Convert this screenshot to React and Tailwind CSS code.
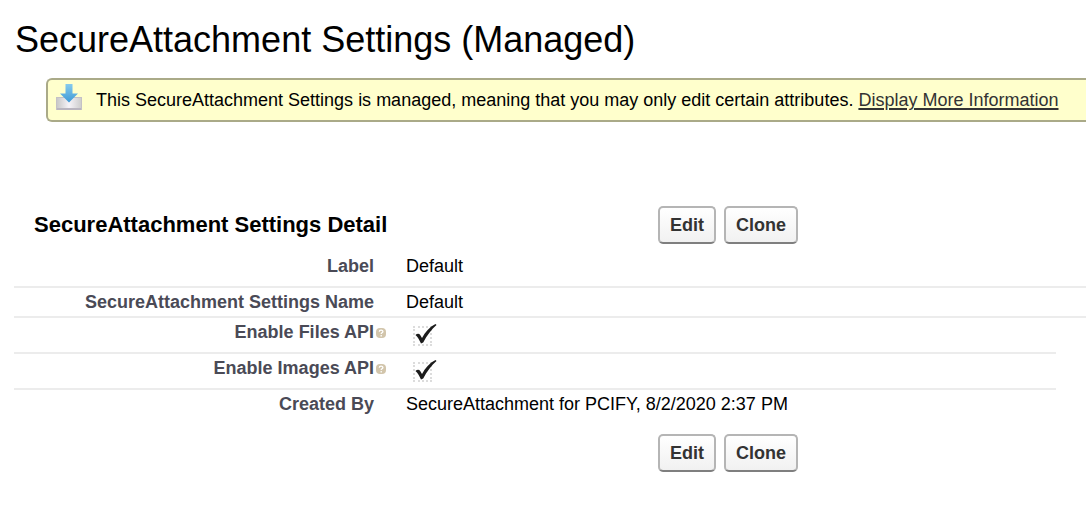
const InstalledIcon = () => (
    <svg className="h-7 w-7 shrink-0" viewBox="0 0 28 28" aria-hidden="true">
        <defs>
            <linearGradient id="tray" x1="0" y1="0" x2="1" y2="0">
                <stop offset="0" stopColor="#c6c6c6" />
                <stop offset="0.5" stopColor="#f6f3f8" />
                <stop offset="1" stopColor="#cccccc" />
            </linearGradient>
            <linearGradient id="arrow" x1="0" y1="0" x2="0" y2="1">
                <stop offset="0" stopColor="#86cbee" />
                <stop offset="1" stopColor="#3f9ad6" />
            </linearGradient>
        </defs>
        <rect x="0.500" y="13.500" width="25" height="12" fill="url(#tray)" stroke="#c4c1c6" />
        <path d="M1 25h24" stroke="#b9b5bf" strokeWidth="2" />
        <path d="M9.500 0h7v9.500h5.500L13 18.500 4 9.500h5.500z" fill="url(#arrow)" />
    </svg>
);

const HelpIcon = () => (
    <svg className="h-[10px] w-[10px]" viewBox="0 0 10 10" aria-hidden="true">
        <rect width="10" height="10" rx="4" fill="#d2c5ab" />
        <path
            d="M3.300 3.700C3.300 1.600 6.900 1.600 6.900 3.600 6.900 4.800 5.200 4.800 5.200 6M5.200 7.100v1.300"
            fill="none"
            stroke="#fff"
            strokeWidth="1.300"
        />
    </svg>
);

const CheckMark = () => (
    <svg
        className="pointer-events-none col-start-1 row-start-1 h-6 w-6"
        viewBox="0 0 24 24"
        aria-hidden="true"
    >
        <path
            d="M2.500 12C4 10.600 6 10.300 7.200 12L9 15C12 9 16.500 4 22.500 1L23.500 2C18.500 6.500 14 12 10.200 19.500L8 20.500C6.300 17 5 14 2.500 12z"
            fill="#1c1c1c"
        />
    </svg>
);

const Button = ({ children }) => (
    <button
        type="button"
        className="h-[38px] rounded-[5px] border-2 border-[#b5b5b5] border-b-[#7f7f7f] bg-linear-to-b from-white to-[#f1f1f1] px-[10px] text-[18px] leading-5 font-bold text-[#333]"
    >
        {children}
    </button>
);

const Actions = () => (
    <div className="flex gap-2">
        <Button>Edit</Button>
        <Button>Clone</Button>
    </div>
);

const Row = ({ label, className = "", children }) => (
    <div className={`grid grid-cols-[360px_1fr] gap-x-8 border-[#ececec] pt-1 ${className}`}>
        <dt className="text-right font-bold text-[#4a4a56]">{label}</dt>
        <dd>{children}</dd>
    </div>
);

const CheckRow = ({ id, label }) => (
    <div className="mr-[30px] grid h-9 grid-cols-[360px_20px_1fr] border-b-2 border-[#ececec] pt-1">
        <dt className="text-right font-bold text-[#4a4a56]">
            <label htmlFor={id}>{label}</label>
        </dt>
        <div className="pt-[6px] pl-[2px]">
            <HelpIcon />
        </div>
        <dd className="grid grid-cols-[24px] grid-rows-[24px] pt-px pl-[19px]">
            <input
                id={id}
                type="checkbox"
                checked
                readOnly
                className="col-start-1 row-start-1 mt-[3px] h-5 w-[19px] appearance-none border-2 border-dotted border-[#dcdcdc]"
            />
            <CheckMark />
        </dd>
    </div>
);

export default function App() {
    return (
        <main className="overflow-hidden bg-white pt-5 pb-11 pl-[14px] font-['Liberation_Sans',Arial,sans-serif] text-[18px] leading-5 text-black">
            <h1 className="pl-px text-[36px] leading-10">SecureAttachment Settings (Managed)</h1>

            <div className="mt-[18px] ml-8 flex h-11 items-center gap-3 rounded-l-md border-2 border-r-0 border-[#aaaa88] bg-[#ffffcc] pl-2 whitespace-nowrap">
                <div className="pb-1">
                    <InstalledIcon />
                </div>
                <p>
                    This SecureAttachment Settings is managed, meaning that you may only edit certain
                    attributes.{" "}
                    <a href="#" className="text-[#333] underline decoration-2 underline-offset-2">
                        Display More Information
                    </a>
                </p>
            </div>

            <section className="mt-[84px]">
                <div className="grid grid-cols-[644px_1fr] items-center">
                    <h2 className="pl-5 text-[22px] leading-6 font-bold">SecureAttachment Settings Detail</h2>
                    <Actions />
                </div>

                <dl className="mt-2">
                    <Row label="Label" className="h-9 border-b-2">
                        Default
                    </Row>
                    <Row label="SecureAttachment Settings Name" className="border-b-2 pb-1">
                        Default
                    </Row>
                    <CheckRow id="files-api" label="Enable Files API" />
                    <CheckRow id="images-api" label="Enable Images API" />
                    <Row label="Created By">SecureAttachment for PCIFY, 8/2/2020 2:37 PM</Row>
                </dl>

                <div className="mt-5 pl-[644px]">
                    <Actions />
                </div>
            </section>
        </main>
    );
}
